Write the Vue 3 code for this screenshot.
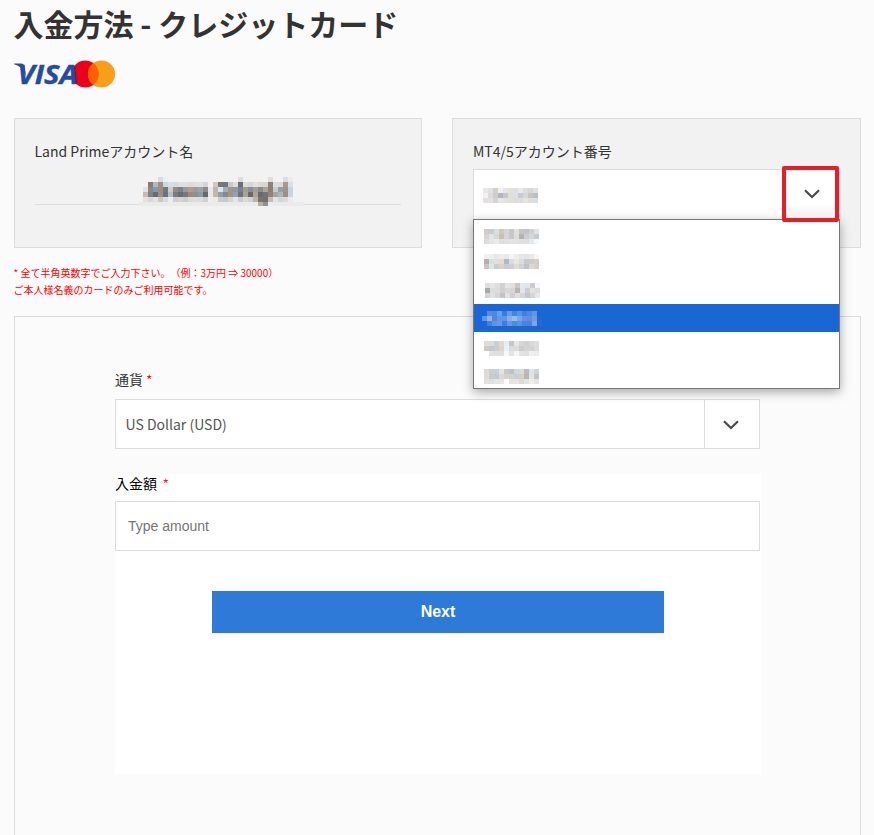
<script setup>
import { h } from 'vue'

const parse = (rows) => rows.map((r) => r.trim().split(/\s+/))

// Pixelated value: one rect per cell, "-" leaves the cell empty
const Mosaic = (props) => {
  const cells = []
  props.rows.forEach((row, y) =>
    row.forEach((c, x) => {
      if (c !== '-') cells.push(h('rect', { x: x * 5, y: y * 5, width: 5, height: 5, fill: '#' + c }))
    })
  )
  const w = props.rows[0].length * 5
  const ht = props.rows.length * 5
  return h('svg', { width: w, height: ht, viewBox: `0 0 ${w} ${ht}`, 'shape-rendering': 'crispEdges' }, cells)
}
Mosaic.props = ['rows']

const holder = parse([
  '- - - dadbdc ebeef2 - - - - - - - - - - - - - - dddddd - - - - - e0dddb - - dfdddb e8edf0',
  '- 8c7a6d b1b8c5 9f9080 ccd7e6 dcdfe2 d9dadb dfe0e0 e0e0e0 dcdcda e2e0de dfe2e2 d5d6da - d2c9be 77777c 73767b c8c9ca dddddd 6c6e73 dcdcda d6d6d6 e3e0dd d9dbdb d9d5cf 8e8277 dadddf d9dbdd a8998a d9e0e9',
  'e7e1db 84888c 8699a8 9c8f80 707780 c9cecb 958b84 7b828d 9c9898 aa9f96 9b9b9d 9aa5a7 8f898b e2e8f0 c4b6a5 d5e7f5 a7adb1 9e9791 8f989f 79828b a59c92 8d8e93 a49f99 8c8b8b ada398 8d8175 c9cccd 97a0a6 a09387 c8d3e3',
  'ccb9a8 808283 686c72 9d9080 6e737b b7bfc3 777b83 696d73 767a80 a08b78 8e8f91 8b9ca3 6c6565 e4e8ec c8b5a3 8fa0aa 85888c a6947f 95a1ab 6d747c a7a29c 6d6864 aaa49b 67696d 70747a 908478 a5a5a5 aab6c3 9f8e7b cad6e8',
  'e4e1de d9d7d5 e0e3e6 cec6bd d9dcdf eceeee ced0d2 d7d3ce cccccc dcdbd8 ddddde d8dcdf d0d0d0 eeeeee ede9e4 cacccf c7c7c7 d9d4cd e2e4e5 c8cbd0 ddd9d4 d0d1d4 bdb5aa 78736e 6d6f73 c6bdb3 e3e3e3 d3d5d9 dfdbd3 e9ecef',
  '- - - - - - - - - - - - - - - - - - - - - - - b5afa9 8f9195 ededed - - - -'
])

const current = parse([
  'ebe7e4 dfe1e4 d5cfcb f1f0ef e3e5e9 e9dfd4 dddfe4 ebe9e7 dcdddf d9d5d2 dfe0e2',
  'f5f1ee d7dce1 d1ccca b9b7b6 c4c7cb dfdfda dde1e8 c8cbd0 d7d7d9 c9c3c1 bcbdc1',
  'e2dfdc e6e1df d3d6d9 e5e7e8 e5e3df e1e0df e0dbd5 dedfe2 e5e5e4 e0dfe0 dde0e2'
])

const accounts = [
  { x: 11, y: 9, rows: parse([
    'd0cac8 c9cbd0 d8dfe1 cbc8be d4d4d9 c5c7cb e2e0dc c8c6c3 c1c5cb d5cfcb dce4e7',
    'd7d2d0 dfe5e8 d9d8d4 c8c0ba d6d6da c7c7ca dfddda b4b1b1 cccdd0 d3d7d9 c7c9cd',
    'dcdcde e7e5e3 ebebec e0dfdd dfe0e2 e5e2df e4e3e1 dfe0e2 e1dfdc e5eaf0 f6f9fb']) },
  { x: 11, y: 6, rows: parse([
    'f1f1f0 eceeef e6e7e8 f0ece8 e7e9ee f4f5f5 f1eee9 e5e8ea e5e5e6 e9e9e7 f7f7f7',
    'b8aeb0 d8e0df e0e0df e5dbd0 b0b8c5 d8dde1 e9e7df d8dce3 c9cacc cccccd d5cdc7',
    'cbc3c4 e1e4e5 cdcdcf d7d3cc c7cdd4 d0cfcd dedddb cfd3d8 c5c3c2 d9d9d9 d9cfc9']) },
  { x: 12, y: 7, rows: parse([
    'e0dfdd e5e7e8 e0dfe0 d0d1d3 e3e4e3 e3dfdc cbc8c9 e3e8ef e4e5e7 cccdd0 f5f8fb',
    'a4a8af dcdddd d7dde1 d3d0ce d7d8db d8d5d2 bbb3ad e2e5eb d2cdca dfe4e9 dddddc',
    'd1d3d5 e2e0dd d6d6d7 c3c3c5 e2e1df cecfd2 e0dfdd d2d6dd c7c6c5 d6d5d3 e6e8ea']) },
  { x: 9, y: 7, active: true, rows: parse([
    '1967d4 578bdd 4d89df 68a0e6 397ddb 669ce5 4883d8 5b92e0 427edc 4e88e0 6794df 1967d4',
    '5797e5 9bb0e7 5386d9 6296e2 6295df 80afe9 90bfea 72a8e8 6b8ee0 658bdc 6c9ce2 2367d1',
    '1967d4 4380db 5a94e2 679ae2 427ed9 6498e0 4a8bdd 5d93e2 4a84db 4785dc 7ba5e6 246ad4']) },
  { x: 11, y: 9, rows: parse([
    'e4dcd3 dedcda c5d1db e3d7ce e7eff6 c5c6c8 e5e7e4 d6d6d7 d1d1d1 d9d9da dedede',
    'd0cbc2 c1c8d4 cbcccd dfd3cb e4f1fb dedcd8 d8dce0 cccccf d4d4d5 d8d2ce dadddf',
    'ffffff e3e3e4 e1dedc dddfe1 f6f7f8 e3e3e3 f5f5f4 e5e4e3 dfe2e5 f0f0f0 ebecec']) },
  { x: 11, y: 9, rows: parse([
    'e0dad6 d0cecd c7d0d8 e3e4e4 ccc7c2 bcc2ca d2d9da d8dddc c0b9b9 dce2e7 d2d3d5',
    'dfdbd7 c8cacd c4cbd0 d8d9dc d7d1ca d0d2d5 c4d0d9 d7cec8 b9b5b4 e1e4e6 c5c4c5',
    'e1e0df dfdfe0 e3e5e6 e9e5e1 ffffff e4e3e0 e3e5e7 dedad6 e1e3e4 f0eeea e5e5e5']) }
]
</script>

<template>
  <main class="page">
    <h1>入金方法 - クレジットカード</h1>
    <svg class="brands" width="102" height="36" viewBox="0 -4 102 36">
      <circle cx="71.300" cy="14" r="13.600" fill="#eb001b" />
      <circle cx="87.500" cy="14" r="13.600" fill="#f79e1b" />
      <path d="M79.400 3.100a13.600 13.600 0 0 1 0 21.800a13.600 13.600 0 0 1 0-21.800z" fill="#ff5f00" />
      <path d="M.3 3.600h7q2.400 0 2.900 2.300l2 10C10 10 5.700 5.600 0 4.300z" fill="#244ba5" />
      <text class="visa" x="3.500" y="23.700" textLength="60.500" lengthAdjust="spacingAndGlyphs">VISA</text>
    </svg>

    <div class="accounts">
      <section class="card">
        <label class="holder-label">Land Primeアカウント名</label>
        <div class="holder"><span class="holder-value"><Mosaic :rows="holder" /></span></div>
      </section>
      <section class="card">
        <label>MT4/5アカウント番号</label>
        <div class="select account-select">
          <span class="current"><Mosaic :rows="current" /></span>
          <ul class="menu">
            <li v-for="(a, i) in accounts" :key="i" :class="{ active: a.active }"
                :style="{ paddingLeft: a.x - 1 + 'px', paddingTop: a.y + 'px' }">
              <Mosaic :rows="a.rows" />
            </li>
          </ul>
          <span class="highlight">
            <svg width="16" height="10" viewBox="0 0 16 10"><path class="chevron" d="M1 1.200 8 8l7-6.800" /></svg>
          </span>
        </div>
      </section>
    </div>

    <p class="notes">* 全て半角英数字でご入力下さい。（例：3万円 ⇒ 30000）<br>ご本人様名義のカードのみご利用可能です。</p>

    <section class="form">
      <label class="currency">通貨 <i>*</i></label>
      <div class="select currency-select">
        <span>US Dollar (USD)</span>
        <b><svg width="16" height="10" viewBox="0 0 16 10"><path class="chevron" d="M1 1.200 8 8l7-6.800" /></svg></b>
      </div>
      <div class="amount">
        <label>入金額 <i>*</i></label>
        <input type="text" placeholder="Type amount">
        <button type="button">Next</button>
      </div>
    </section>
  </main>
</template>

<style>
body { background: #fbfbfb; }
</style>

<style scoped>
* { box-sizing: border-box; }
.page {
  height: 835px;
  overflow: hidden;
  padding: 0 13px 0 14px;
  display: flex;
  flex-direction: column;
  font-family: "Noto Sans CJK JP", sans-serif;
  font-size: 14px;
  color: #333;
  text-spacing-trim: space-all;
}
svg { display: block; flex: none; }
h1 { margin: 1px 0 0 -.5px; height: 44px; font-size: 30px; line-height: 44px; font-weight: 700; white-space: nowrap; }
.brands { margin-top: 11px; overflow: visible; }
.visa { font: italic 700 26.5px "Open Sans", sans-serif; fill: #244ba5; stroke: #244ba5; stroke-width: .4; }
.accounts { display: grid; grid-template-columns: 408px 409px; gap: 30px; margin-top: 26px; }
.card { height: 130px; padding: 22px 20px 0; border: 1px solid #dcdcdc; background: #f2f2f2; }
.card label { display: block; height: 28px; line-height: 21px; }
.card .holder-label { margin-left: -.5px; }
.holder { height: 36px; border-bottom: 1px solid #dcdcdc; display: flex; padding-left: 103px; }
.holder-value { width: 166px; height: 37px; padding: 8px 0 0 5px; overflow: hidden; background: linear-gradient(#f2f2f2 33px, #ebebeb 33px); }
.holder-value, .current { flex: none; }
.select { display: flex; border: 1px solid #dcdcdc; background: #fff; }
.account-select { position: relative; height: 51px; width: 367px; }
.current { padding: 18px 0 0 9px; }
.menu {
  position: absolute; top: 49px; left: -1px; width: 367px; margin: 0; padding: 0;
  list-style: none; border: 1px solid #767676; background: #fff;
  box-shadow: 0 3px 10px rgba(0, 0, 0, .34);
}
.menu li { height: 28px; }
.menu .active { background: #1967d4; }
.highlight {
  position: absolute; left: 308px; top: -4px; width: 57px; height: 56px;
  border: 4px solid #ed1c24; border-radius: 2px;
  background: linear-gradient(#fff 70%, #f0f0f0);
  display: flex; justify-content: center; padding: 19px 0 0 2px;
}
.chevron { fill: none; stroke: #45474c; stroke-width: 2.1; }
.notes { margin: 16px 0 0 -.5px; height: 52px; font-size: 10px; line-height: 17px; color: #f00; }
.form { flex: 1; border: 1px solid #dcdcdc; border-bottom: 0; padding: 52px 100px 0; }
.form label { display: block; line-height: 21px; white-space: pre; }
.form i { font-style: normal; color: #f00; }
.currency { height: 30px; }
.currency i { font-size: 13px; }
.currency-select { width: 645px; height: 50px; align-items: center; justify-content: space-between; padding-left: 10px; color: #555; }
.currency-select span { margin-left: -.5px; }
.currency-select b { width: 55px; height: 48px; border-left: 1px solid #dcdcdc; display: flex; align-items: center; justify-content: center; padding: 2px 2px 0 0; }
.amount { width: 646px; height: 300px; margin-top: 25px; background: #fff; display: flex; flex-direction: column; }
.amount label { height: 27px; line-height: 18px; color: #000; }
.amount i { margin-left: 2px; font-size: 16px; line-height: 1; font-weight: 300; position: relative; top: 2px; }
.amount input { width: 645px; height: 50px; border: 1px solid #dcdcdc; padding: 0 12px; font: 14px "Liberation Sans", sans-serif; }
.amount input::placeholder { color: #757575; }
.amount button { width: 452px; height: 42px; margin: 40px 0 0 97px; border: 0; padding: 0; background: #2d7ad9; color: #fff; font: bold 16px "Liberation Sans", sans-serif; }
</style>
